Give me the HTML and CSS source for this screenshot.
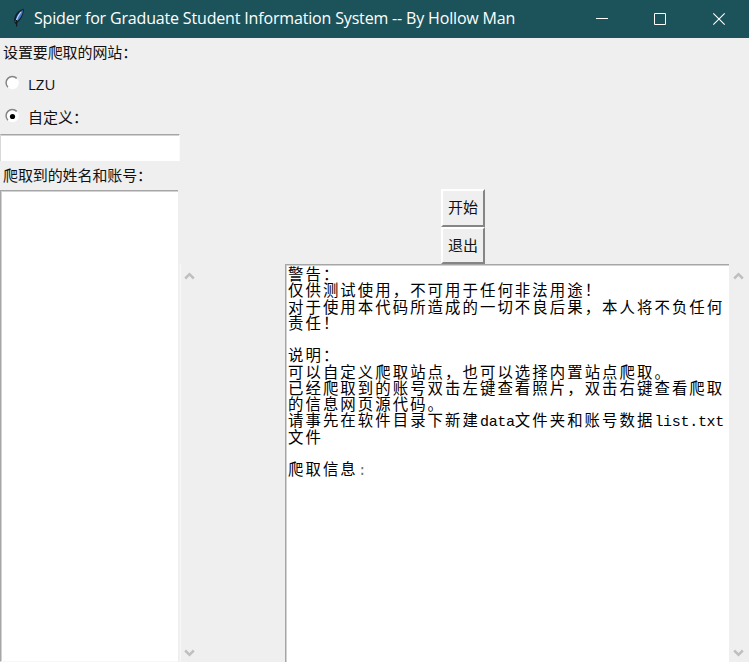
FILE: index.html
```html
<!DOCTYPE html>
<html lang="zh-CN">
<head>
<meta charset="utf-8">
<title>Spider for Graduate Student Information System -- By Hollow Man</title>
<link rel="stylesheet" href="styles.css">
</head>
<body>
<header class="titlebar">
  <svg class="feather" width="14" height="20" viewBox="0 0 14 20">
    <path d="M11.8.8C7.5 1.5 2.6 5.5 2 12l1 4 2.4-1.2C9.6 11 12 6 11.8.8z" fill="#14202a"/>
    <path d="M10.8 2C7.6 3.8 4.4 7.5 3.8 12l1.4 1.2C8.9 9.8 10.9 6 10.8 2z" fill="#3f7dcb"/>
    <path d="M9 4C6.3 7.5 4.5 11 4.2 14" fill="none" stroke="#c5dcf3" stroke-width="1.1"/>
    <path d="M4.6 12L4.6 18.5" stroke="#101a20" stroke-width="1.3"/>
  </svg>
  <h1 class="title">Spider for Graduate Student Information System -- By Hollow Man</h1>
  <div class="controls">
    <svg width="58" height="38" viewBox="0 0 58 38"><path d="M22 18.5h12" stroke="#fff"/></svg>
    <svg width="58" height="38" viewBox="0 0 58 38"><path d="M22.5 13.5h11v11h-11z" fill="none" stroke="#fff"/></svg>
    <svg width="59" height="38" viewBox="0 0 59 38"><path d="M23.3 13.3l11.4 11.4M34.7 13.3L23.3 24.7" stroke="#fff" stroke-width="1.1"/></svg>
  </div>
</header>
<main class="window">
  <section class="sidebar">
    <div class="label site-label">设置要爬取的网站：</div>
    <label class="option">
      <svg class="radio" width="16" height="16" viewBox="0 0 16 16"><circle cx="8.5" cy="8" r="6.2" fill="#fff"/><path d="M3.9 12.2A6.2 6.2 0 0 1 12.7 3.4" fill="none" stroke="#858585" stroke-width="1.5"/></svg>
      <span>LZU</span>
    </label>
    <label class="option">
      <svg class="radio" width="16" height="16" viewBox="0 0 16 16"><circle cx="8.5" cy="8" r="6.2" fill="#fff"/><path d="M3.9 12.2A6.2 6.2 0 0 1 12.7 3.4" fill="none" stroke="#858585" stroke-width="1.5"/><circle cx="8.5" cy="8.5" r="2.6" fill="#000"/></svg>
      <span>自定义：</span>
    </label>
    <div class="entry"></div>
    <div class="label list-label">爬取到的姓名和账号：</div>
    <div class="listbox"></div>
  </section>
  <div class="scrollbar list-scroll">
    <svg width="11" height="8" viewBox="0 0 11 8"><path d="M1.2 6.5L5.5 2.2l4.3 4.3" fill="none" stroke="#bfbfbf" stroke-width="2.5"/></svg>
    <svg width="11" height="8" viewBox="0 0 11 8"><path d="M1.2 1.5l4.3 4.3 4.3-4.3" fill="none" stroke="#bfbfbf" stroke-width="2.5"/></svg>
  </div>
  <div class="actions">
    <div class="button">开始</div>
    <div class="button">退出</div>
  </div>
  <section class="output">
    <div class="line">警告：</div>
    <div class="line">仅供测试使用，不可用于任何非法用途！</div>
    <div class="line">对于使用本代码所造成的一切不良后果，本人将不负任何</div>
    <div class="line">责任！</div>
    <div class="line"></div>
    <div class="line">说明：</div>
    <div class="line">可以自定义爬取站点，也可以选择内置站点爬取。</div>
    <div class="line">已经爬取到的账号双击左键查看照片，双击右键查看爬取</div>
    <div class="line">的信息网页源代码。</div>
    <div class="line">请事先在软件目录下新建<span class="latin">data</span>文件夹和账号数据<span class="latin">list.txt</span></div>
    <div class="line">文件</div>
    <div class="line"></div>
    <div class="line">爬取信息<span class="latin colon">:</span></div>
  </section>
  <div class="scrollbar output-scroll">
    <svg width="11" height="8" viewBox="0 0 11 8"><path d="M1.2 6.5L5.5 2.2l4.3 4.3" fill="none" stroke="#bfbfbf" stroke-width="2.5"/></svg>
    <svg width="11" height="8" viewBox="0 0 11 8"><path d="M1.2 1.5l4.3 4.3 4.3-4.3" fill="none" stroke="#bfbfbf" stroke-width="2.5"/></svg>
  </div>
</main>
</body>
</html>
```
FILE: styles.css
```css
* { box-sizing: border-box; }
body {
  margin: 0;
  height: 662px;
  overflow: hidden;
  display: flex;
  flex-direction: column;
  background: #efefef;
  color: #111;
  font: 15px/20px "Open Sans", "Noto Sans CJK SC", sans-serif;
}
svg { display: block; flex: none; }
.titlebar {
  height: 38px;
  display: flex;
  align-items: center;
  background: #1c535b;
  color: #fff;
}
.feather { margin: 0 0 3px 12px; }
.title {
  margin: 0 0 0 8px;
  flex: 1;
  font: 400 16px/36px "Open Sans", sans-serif;
  height: 38px;
  letter-spacing: -0.165px;
  white-space: nowrap;
}
.controls { display: flex; }
.window {
  flex: 1;
  min-height: 0;
  display: grid;
  grid-template-columns: 180px 19px 86px 444px 20px;
  grid-template-rows: 226px 398px;
}
.sidebar {
  grid-row: 1 / 3;
  display: flex;
  flex-direction: column;
}
.label { padding-left: 3px; white-space: nowrap; }
.site-label { height: 30px; line-height: 29px; letter-spacing: -0.1px; }
.option {
  height: 33px;
  display: flex;
  align-items: center;
  gap: 8px;
  padding: 0 0 2px 4px;
}
.radio { margin-top: -1px; }
.entry {
  height: 27px;
  background: #fff;
  border-top: 1px solid #a6a6a6;
  border-left: 1px solid #d8d8d8;
  border-right: 1px solid #fafafa;
  box-shadow: inset 0 1px #d2d2d2;
}
.list-label { height: 29px; line-height: 28px; letter-spacing: -0.1px; }
.listbox {
  flex: 1;
  margin-right: 2px;
  background: #fff;
  border-top: 1px solid #a6a6a6;
  border-left: 1px solid #a6a6a6;
  border-bottom: 1px solid #f7f7f7;
  box-shadow: inset 1px 1px #d2d2d2;
}
.scrollbar {
  grid-row: 2;
  display: flex;
  flex-direction: column;
  justify-content: space-between;
  align-items: center;
  padding: 8px 2px 5px 0;
}
.list-scroll { grid-column: 2; border-left: 1px solid #f8f8f8; }
.output-scroll { grid-column: 5; }
.actions {
  grid-column: 4;
  grid-row: 1;
  display: flex;
  flex-direction: column;
  justify-content: flex-end;
  margin-left: 156px;
}
.button {
  width: 44px;
  height: 37.5px;
  border: 2px solid;
  border-color: #fff #858585 #858585 #fff;
  background: #efefef;
  text-align: center;
  line-height: 33px;
}
.output {
  grid-column: 4;
  grid-row: 2;
  padding-left: 2px;
  background: #fff;
  border-top: 1px solid #a6a6a6;
  border-left: 1px solid #a6a6a6;
  box-shadow: inset 1px 1px #d2d2d2;
  color: #000;
  font-family: "Noto Sans CJK SC", sans-serif;
  font-size: 15.4px;
  letter-spacing: 2.06px;
}
.line { height: 16.25px; line-height: 16.25px; white-space: pre; }
.latin { font: 15px/16px "Liberation Mono", monospace; letter-spacing: -0.3px; }
.colon { color: #777; }
```
